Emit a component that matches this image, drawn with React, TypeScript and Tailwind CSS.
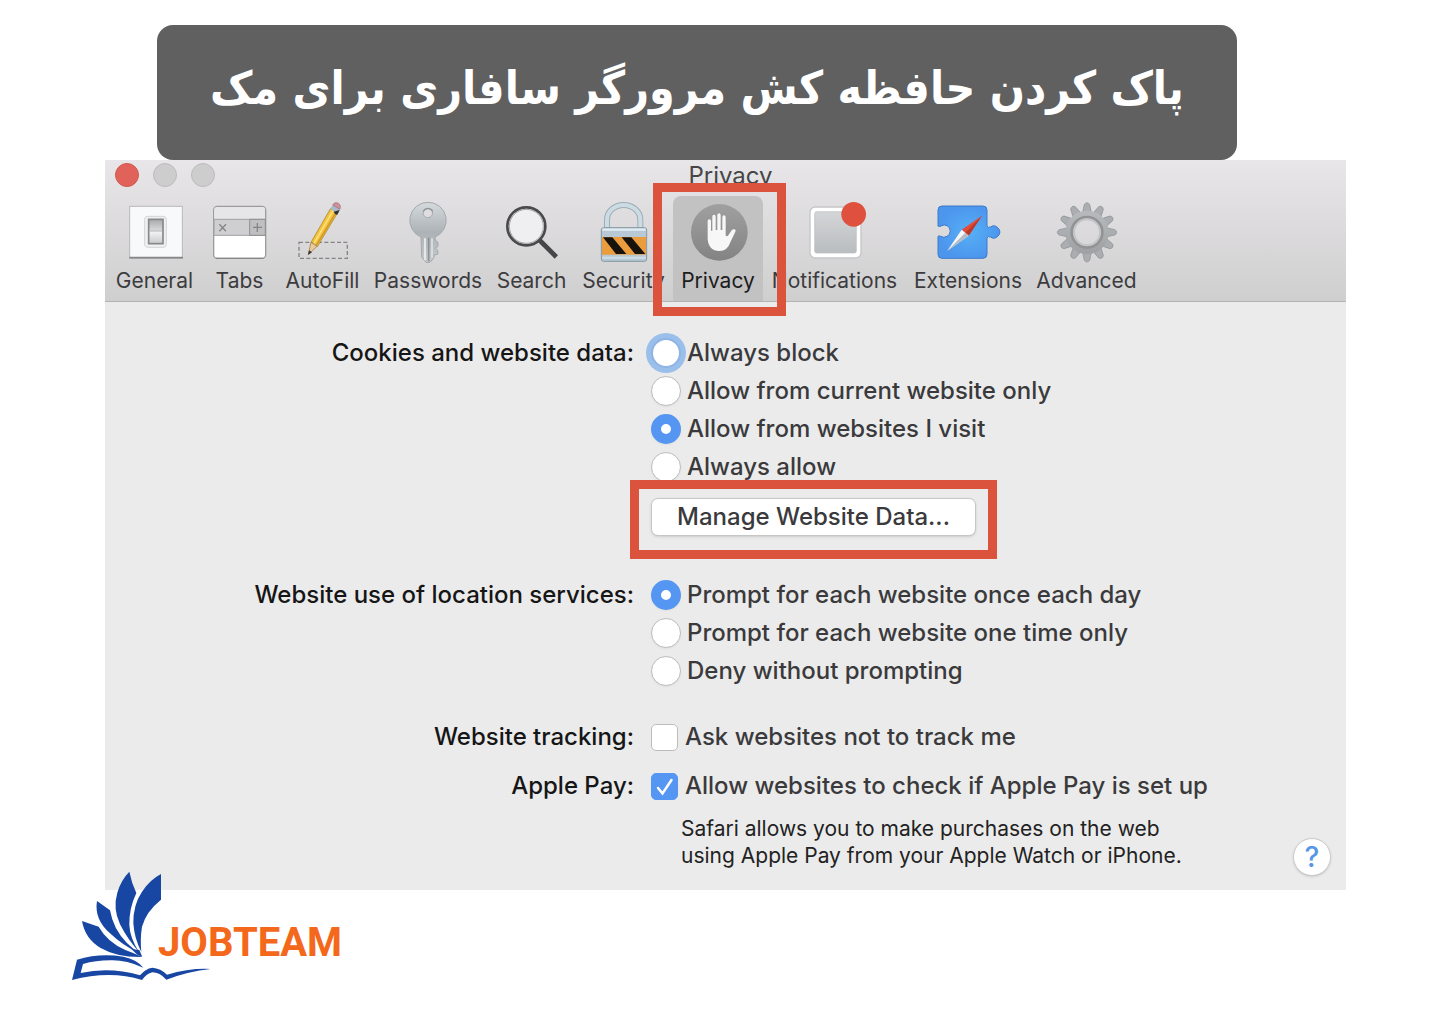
import type { ReactNode } from "react";

const gearTeeth = [0, 30, 60, 90, 120, 150, 180, 210, 240, 270, 300, 330];

function GeneralIcon() {
  return (
    <svg viewBox="66 132 198 198" className="size-[66px]" aria-hidden="true">
      <defs>
        <linearGradient id="switch" x1="0" y1="0" x2="0" y2="1">
          <stop offset="0" stopColor="#a9a9ab" />
          <stop offset="0.45" stopColor="#d8d9db" />
          <stop offset="0.5" stopColor="#f3f4f5" />
          <stop offset="1" stopColor="#c9cacc" />
        </linearGradient>
      </defs>
      <rect x="89" y="154" width="158" height="156" fill="#f8f9fa" stroke="#b9b8ba" strokeWidth="3" />
      <path d="M88 308H249" stroke="#868587" strokeWidth="5" />
      <rect x="134" y="184" width="65" height="93" rx="9" fill="#eff0f1" stroke="#d3d4d6" strokeWidth="3" />
      <rect x="146" y="193" width="43" height="73" fill="url(#switch)" stroke="#87888a" strokeWidth="5" />
      <path d="M148 228H187" stroke="#b3b4b6" strokeWidth="3" />
    </svg>
  );
}

function TabsIcon() {
  return (
    <svg viewBox="321 132 198 198" className="size-[66px]" aria-hidden="true">
      <rect x="341" y="154" width="156" height="156" rx="11" fill="#fff" stroke="#9c9b9d" strokeWidth="4" />
      <path d="M343 193v-27q0-10 10-10h132q10 0 10 10v27z" fill="#e6e5e7" />
      <path d="M342 193H496V241H342z" fill="#cfced0" stroke="#a19fa2" strokeWidth="3" />
      <path d="M449 193H496V241H449z" fill="#bfbec0" stroke="#8f8e90" strokeWidth="3" />
      <path d="M358 208l20 21M378 208l-20 21M459 217h27M472 204v27" stroke="#858486" strokeWidth="4" />
      <path d="M348 310H490" stroke="#868587" strokeWidth="4" />
    </svg>
  );
}

function AutoFillIcon() {
  return (
    <svg viewBox="571 132 198 198" className="size-[66px]" aria-hidden="true">
      <rect x="598" y="262" width="145" height="48" fill="none" stroke="#858386" strokeWidth="4" strokeDasharray="12 7" />
      <path d="M626 298L634 262L652 274z" fill="#ecc99a" stroke="#94713f" strokeWidth="2" />
      <path d="M625 300L628 286L637 292z" fill="#333" />
      <path d="M634 262L693 160L714 173L653 275L644 265z" fill="#f2c23c" stroke="#a07a22" strokeWidth="2" />
      <path d="M643 265L701 166" stroke="#ffe07a" strokeWidth="5" />
      <path d="M650 271L709 172" stroke="#cf972a" strokeWidth="4" />
      <path d="M692 161L700 149L721 163L713 178z" fill="#a5bacb" />
      <path d="M702 170L720 165L713 179L707 178z" fill="#2f2f32" />
      <path d="M699 150Q704 140 715 144Q725 150 721 163z" fill="#d0909b" stroke="#a46a76" strokeWidth="2" />
    </svg>
  );
}

function PasswordsIcon() {
  return (
    <svg viewBox="75 132 198 198" className="size-[66px]" aria-hidden="true">
      <defs>
        <linearGradient id="key" x1="0" y1="0" x2="0" y2="1">
          <stop offset="0" stopColor="#d5dadd" />
          <stop offset="0.5" stopColor="#acb2b6" />
          <stop offset="1" stopColor="#c6cacc" />
        </linearGradient>
      </defs>
      <path
        d="M174 142A54 54 0 0 0 153 246L155 306L168 322H180L192 308V300L203 298L204 287L197 280L204 274V262L196 256L195 246A54 54 0 0 0 174 142zM174 160A14 14 0 1 1 173 160z"
        fill="url(#key)"
        fillRule="evenodd"
        stroke="#a3a9ac"
        strokeWidth="3"
      />
      <path d="M165 250V316" stroke="#e4e8ea" strokeWidth="6" />
      <path d="M176 248V319" stroke="#8b9195" strokeWidth="5" />
      <path d="M186 250V308" stroke="#dde1e3" strokeWidth="5" />
      <path d="M160 169A16 16 0 0 1 188 169" fill="none" stroke="#8c9296" strokeWidth="4" />
    </svg>
  );
}

function SearchIcon() {
  return (
    <svg viewBox="388 132 198 198" className="size-[66px]" aria-hidden="true">
      <path d="M506 252L560 306" stroke="#464648" strokeWidth="14" />
      <circle cx="470" cy="214" r="57" fill="#efeef0" stroke="#4a4a4c" strokeWidth="8" />
      <circle cx="470" cy="214" r="51" fill="none" stroke="#a2a1a4" strokeWidth="3" />
    </svg>
  );
}

function SecurityIcon() {
  return (
    <svg viewBox="664 132 198 198" className="size-[66px]" aria-hidden="true">
      <path d="M712 220V194a50 44 0 0 1 100 0V220" fill="none" stroke="#9badb7" strokeWidth="18" />
      <path d="M712 220V194a50 44 0 0 1 100 0V220" fill="none" stroke="#cddbe3" strokeWidth="12" />
      <rect x="695" y="218" width="136" height="101" rx="7" fill="#b7c9d4" stroke="#8497a2" strokeWidth="3" />
      <path d="M698 224H828" stroke="#e2edf3" strokeWidth="7" />
      <rect x="697" y="246" width="132" height="53" fill="#eb9c3c" />
      <path d="M700 247H728L770 297H739zM756 247H785L827 297H796z" fill="#17120c" />
      <path d="M698 308H828" stroke="#cedde5" strokeWidth="6" />
    </svg>
  );
}

function PrivacyIcon() {
  return (
    <svg viewBox="135 132 198 198" className="size-[66px]" aria-hidden="true">
      <defs>
        <linearGradient id="disc" x1="0" y1="0" x2="0" y2="1">
          <stop offset="0" stopColor="#a1a0a1" />
          <stop offset="1" stopColor="#848384" />
        </linearGradient>
      </defs>
      <circle cx="238" cy="232" r="85" fill="url(#disc)" />
      <path
        d="M203 250V198q0-5 5-5t5 5v29h4V185q0-6 5-6t5 6v40h5V181q0-6 5-6t5 6v44h5V187q0-6 5-6t5 6v54q3 6 8 0l10-15q4-5 9-3t2 7l-15 32q-8 26-33 26-32 0-35-36z"
        fill="#f7f7f7"
      />
    </svg>
  );
}

function NotificationsIcon() {
  return (
    <svg viewBox="487 132 198 198" className="size-[66px]" aria-hidden="true">
      <defs>
        <linearGradient id="badge" x1="0" y1="0" x2="0" y2="1">
          <stop offset="0" stopColor="#d4d5d7" />
          <stop offset="1" stopColor="#b9bdc0" />
        </linearGradient>
      </defs>
      <rect x="511" y="156" width="153" height="153" rx="16" fill="#fff" stroke="#c6c5c7" strokeWidth="4" />
      <rect x="525" y="170" width="125" height="124" rx="6" fill="url(#badge)" stroke="#babcbf" strokeWidth="2" />
      <circle cx="642" cy="178" r="37" fill="#df513e" />
    </svg>
  );
}

function ExtensionsIcon() {
  return (
    <svg viewBox="137 132 198 198" className="size-[66px]" aria-hidden="true">
      <defs>
        <radialGradient id="puzzle">
          <stop offset="0" stopColor="#56b0f5" />
          <stop offset="1" stopColor="#4c96ee" />
        </radialGradient>
      </defs>
      <path
        d="M158 153H281q12 0 12 12V213q4 7 10 3a18 18 0 1 1 0 30q-7-4-10 3V298q0 12-12 12H158q-12 0-12-12V244q3-3 8 0q10 6 19 0a18 18 0 0 0 0-32q-8-5-18 1q-6 3-9 0V165q0-12 12-12z"
        fill="url(#puzzle)"
        stroke="#3c7bc9"
        strokeWidth="3"
      />
      <path d="M278 182L238 242L217 224z" fill="#e24c37" />
      <path d="M278 182L238 242L228 233z" fill="#b93a2c" />
      <path d="M174 287L217 224L238 242z" fill="#f5f7f9" />
      <path d="M174 287L238 242L228 233z" fill="#b4bbc4" />
    </svg>
  );
}

function AdvancedIcon() {
  return (
    <svg viewBox="491 132 198 198" className="size-[66px]" aria-hidden="true">
      <defs>
        <linearGradient id="gear" gradientUnits="userSpaceOnUse" x1="0" y1="142" x2="0" y2="322">
          <stop offset="0" stopColor="#bdc0c2" />
          <stop offset="1" stopColor="#999b9d" />
        </linearGradient>
      </defs>
      {gearTeeth.map((angle) => (
        <path
          key={angle}
          d="M577 172L582 148Q590 138 598 148L603 172z"
          transform={`rotate(${angle} 590 232)`}
          fill="#abaeb0"
          stroke="#8b8d8f"
          strokeWidth="2"
        />
      ))}
      <circle cx="590" cy="232" r="53" fill="none" stroke="url(#gear)" strokeWidth="24" />
      <circle cx="590" cy="232" r="46" fill="none" stroke="#919395" strokeWidth="8" />
      <circle cx="590" cy="232" r="39" fill="none" stroke="#c3c5c6" strokeWidth="6" />
    </svg>
  );
}

type Tool = { label: string; width: string; icon: ReactNode };

const tools: Tool[] = [
  { label: "General", width: "w-[93px]", icon: <GeneralIcon /> },
  { label: "Tabs", width: "w-[77px]", icon: <TabsIcon /> },
  { label: "AutoFill", width: "w-[89px]", icon: <AutoFillIcon /> },
  { label: "Passwords", width: "w-[122px]", icon: <PasswordsIcon /> },
  { label: "Search", width: "w-[85px]", icon: <SearchIcon /> },
  { label: "Security", width: "w-[99px]", icon: <SecurityIcon /> },
  { label: "Privacy", width: "w-[90px]", icon: <PrivacyIcon /> },
  { label: "Notifications", width: "w-[143px]", icon: <NotificationsIcon /> },
  { label: "Extensions", width: "w-[124px]", icon: <ExtensionsIcon /> },
  { label: "Advanced", width: "w-[113px]", icon: <AdvancedIcon /> },
];

function ToolButton({ label, width, icon }: Tool) {
  const active = label === "Privacy";
  return (
    <div className={`relative shrink-0 ${width}`}>
      <button
        type="button"
        className={`flex h-[105px] w-full flex-col items-center rounded-t-lg pt-[3px] ${active ? "bg-[#c3c2c3] text-[#1c1c1c]" : "text-[#3c3c3e]"}`}
      >
        {icon}
        <span className="text-[21px] leading-[32px] whitespace-nowrap">{label}</span>
      </button>
      {active && (
        <div className="pointer-events-none absolute -top-[13px] -right-[23px] -bottom-[15px] -left-[20px] z-10 border-[9px] border-[#db533d]" />
      )}
    </div>
  );
}

function Radio({ name, label, checked, focused }: { name: string; label: string; checked?: boolean; focused?: boolean }) {
  return (
    <label className="flex h-[38px] items-center gap-1.5 whitespace-nowrap">
      <input
        type="radio"
        name={name}
        defaultChecked={checked}
        className={`size-[30px] shrink-0 appearance-none rounded-full border bg-white checked:border-[10px] checked:border-[#5596f2] ${focused ? "border-2 border-[#8fb3e3] ring-[5px] ring-[#9bbfeb]" : "border-[#bcbcbc] shadow-xs"}`}
      />
      {label}
    </label>
  );
}

function Checkbox({ label, checked }: { label: string; checked?: boolean }) {
  return (
    <label className="flex h-[38px] items-center gap-[7px] whitespace-nowrap">
      <span className="grid shrink-0 place-items-center">
        <input
          type="checkbox"
          defaultChecked={checked}
          className="peer col-start-1 row-start-1 size-[27px] appearance-none rounded-[5px] border border-[#bcbcbc] bg-white checked:border-[#5596f2] checked:bg-[#5596f2]"
        />
        <svg viewBox="0 0 27 27" className="pointer-events-none invisible col-start-1 row-start-1 size-[27px] peer-checked:visible" aria-hidden="true">
          <path d="M7 15L11.500 20.500L20.500 7" fill="none" stroke="#fff" strokeWidth="2.500" strokeLinecap="round" />
        </svg>
      </span>
      {label}
    </label>
  );
}

function Row({ title, className, children }: { title: string; className: string; children: ReactNode }) {
  return (
    <div role="group" aria-label={title} className={`grid grid-cols-[529fr_695fr] gap-[17px] ${className}`}>
      <div className="text-right leading-[38px] whitespace-nowrap text-[#161616]">{title}</div>
      <div className="min-w-0">{children}</div>
    </div>
  );
}

function Logo() {
  return (
    <a href="#" className="relative flex items-end">
      <svg viewBox="36 33 420 330" className="h-[110px] w-[140px]" fill="#1846a3" aria-hidden="true">
        <path d="M208 35Q215 70 229 99Q207 145 208 195Q210 235 237 276Q203 238 180 193Q158 145 172 98Q183 60 208 35z" />
        <path d="M303 42V119Q258 155 246 200Q240 236 244 276Q223 235 220 190Q219 135 246 95Q270 59 303 42z" />
        <path d="M111 123L150 151Q160 208 200 248Q218 265 235 278Q190 258 150 220Q102 178 111 123z" />
        <path d="M66 183L116 200Q142 246 196 270Q224 280 246 291Q170 292 122 264Q75 236 66 183z" />
        <path d="M214 267L238 270L247 291L232 284z" />
        <path
          d="M51 299Q120 278 190 290Q230 298 250 323Q200 301 158 301Q110 300 69 312L62 339Q150 320 240 346Q256 326 277 323Q302 325 321 344Q390 324 452 327Q385 334 319 359Q299 337 277 337Q260 341 246 360Q150 330 36 360z"
        />
      </svg>
      <span className="-ml-[54px] mb-[15px] font-[Roboto,sans-serif] text-[40px] leading-[46px] font-bold text-[#f4681b]">JOBTEAM</span>
    </a>
  );
}

export default function App() {
  return (
    <main className="min-h-screen bg-white pt-[25px] font-[Inter,'Liberation_Sans',sans-serif]">
      <h1
        dir="rtl"
        lang="fa"
        className="mr-[203px] ml-[157px] flex h-[135px] items-center justify-center rounded-2xl bg-[#606060] pb-2 font-['DejaVu_Sans_Condensed','DejaVu_Sans',sans-serif] text-[46px] font-bold whitespace-nowrap text-white"
      >
        پاک کردن حافظه کش مرورگر سافاری برای مک
      </h1>

      <section className="mr-[94px] ml-[105px] bg-[#ebebeb] pb-[21px]">
        <header className="border-b border-[#b4b3b4] bg-linear-to-b from-[#e8e6e8] to-[#d0cfd0]">
          <div className="grid h-[36px] grid-cols-[1fr_auto_1fr] items-start pt-[3px] pl-[10px]">
            <div className="flex gap-[14px]">
              <button type="button" aria-label="Close" className="size-6 rounded-full border border-[#d3594d] bg-[#e0625a]" />
              <button type="button" aria-label="Minimize" className="size-6 rounded-full border border-[#bdbcbd] bg-[#cecdce]" />
              <button type="button" aria-label="Zoom" className="size-6 rounded-full border border-[#bdbcbd] bg-[#cecdce]" />
            </div>
            <h2 className="text-[24px] leading-[26px] text-[#464648]">Privacy</h2>
          </div>
          <nav className="flex pl-[3px]">
            {tools.map((tool) => (
              <ToolButton key={tool.label} {...tool} />
            ))}
          </nav>
        </header>

        <form className="relative pt-8 text-[24px] font-medium text-[#3a3a3c]">
          <Row title="Cookies and website data:" className="">
            <Radio name="cookies" label="Always block" focused />
            <Radio name="cookies" label="Allow from current website only" />
            <Radio name="cookies" label="Allow from websites I visit" checked />
            <Radio name="cookies" label="Always allow" />
            <div className="relative mt-3 w-[325px]">
              <button type="button" className="h-[38px] w-full rounded-[7px] border border-[#c6c6c6] bg-white whitespace-nowrap shadow-sm">
                Manage Website Data...
              </button>
              <div className="pointer-events-none absolute -top-[18px] -right-[21px] -bottom-[23px] -left-[21px] border-[9px] border-[#db533d]" />
            </div>
          </Row>

          <Row title="Website use of location services:" className="mt-10">
            <Radio name="location" label="Prompt for each website once each day" checked />
            <Radio name="location" label="Prompt for each website one time only" />
            <Radio name="location" label="Deny without prompting" />
          </Row>

          <Row title="Website tracking:" className="mt-7">
            <Checkbox label="Ask websites not to track me" />
          </Row>

          <Row title="Apple Pay:" className="mt-[11px]">
            <Checkbox label="Allow websites to check if Apple Pay is set up" checked />
            <div className="mt-[10px] flex items-end justify-between pr-[15px] pl-[30px]">
              <p className="text-[21px] leading-[27px] font-normal whitespace-nowrap text-[#222]">
                Safari allows you to make purchases on the web
                <br />
                using Apple Pay from your Apple Watch or iPhone.
              </p>
              <button
                type="button"
                aria-label="Help"
                className="-mb-[7px] size-[38px] rounded-full border border-[#cbcbcb] bg-white text-[28px] leading-[36px] font-medium text-[#5596e8] shadow-sm"
              >
                ?
              </button>
            </div>
          </Row>
        </form>
      </section>

      <div className="-mt-[19px] ml-[72px] flex pb-8">
        <Logo />
      </div>
    </main>
  );
}
